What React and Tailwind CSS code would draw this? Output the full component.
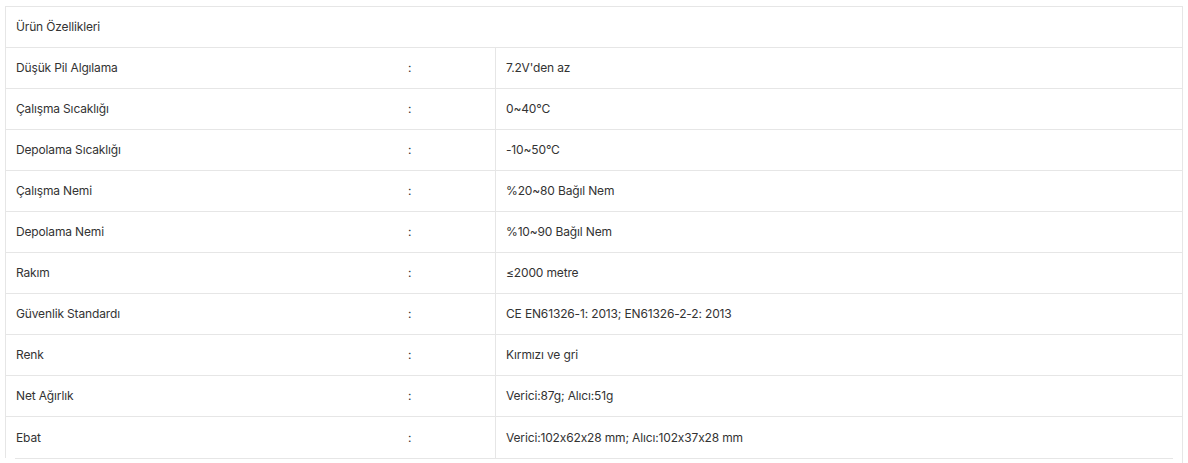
const rows = [
	["Düşük Pil Algılama", "7.2V'den az"],
	["Çalışma Sıcaklığı", "0~40°C"],
	["Depolama Sıcaklığı", "-10~50°C"],
	["Çalışma Nemi", "%20~80 Bağıl Nem"],
	["Depolama Nemi", "%10~90 Bağıl Nem"],
	["Rakım", "≤2000 metre"],
	["Güvenlik Standardı", "CE EN61326-1: 2013; EN61326-2-2: 2013"],
	["Renk", "Kırmızı ve gri"],
	["Net Ağırlık", "Verici:87g; Alıcı:51g"],
	["Ebat", "Verici:102x62x28 mm; Alıcı:102x37x28 mm"],
];

const App = () => {
	return (
		<div className="min-h-[463px] bg-white px-[5px] pt-[6px] font-['Inter',Arial,sans-serif] text-[12px] tracking-[-0.15px] text-[#333]">
			<div className="border-r border-[#e6e6e6] min-h-[457px]">
				<div className="border-l border-t border-[#e6e6e6]">
					<div className="h-[41px] flex items-center pl-[10px] border-b border-[#e6e6e6]">
						Ürün Özellikleri
					</div>
					{rows.map(([label, value], i) => (
						<div
							key={label}
							className={
								"grid grid-cols-[392px_97px_1fr] h-[41px] " +
								(i < rows.length - 1 ? "border-b border-[#e6e6e6]" : "")
							}
						>
							<div className="flex items-center pl-[10px]">{label}</div>
							<div className="flex items-center pl-[10px]">:</div>
							<div className="flex items-center pl-[10px] border-l border-[#e6e6e6]">
								{value}
							</div>
						</div>
					))}
				</div>
				<div className="mx-[10px] mr-[9px] border-t border-[#e6e6e6] h-[5px]"></div>
			</div>
		</div>
	);
};

export default App;
